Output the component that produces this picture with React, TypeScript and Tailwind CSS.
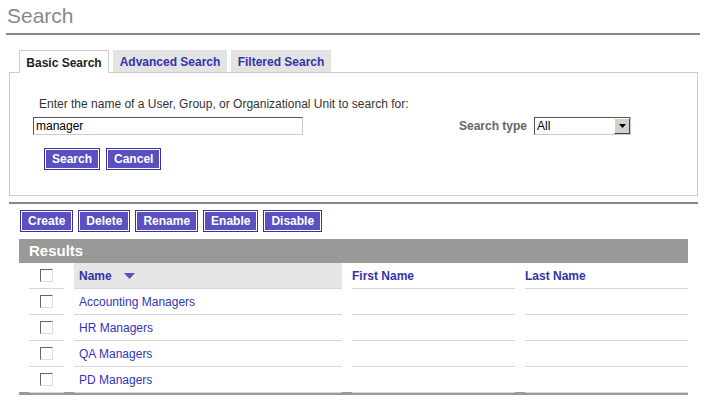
import React from "react";

const font = "font-['Liberation_Sans',Arial,Helvetica,sans-serif]";

function Btn({ label }: { label: string }) {
  return (
    <button className="h-[22px] px-[7px] border border-[#3a30a0] bg-[#5a50c0] shadow-[inset_0_0_0_1px_#ffffff] text-white font-bold text-[12px] leading-[20px]">
      {label}
    </button>
  );
}

function Check() {
  return (
    <span className="inline-block w-[13px] h-[13px] bg-white border border-t-[#666] border-l-[#666] border-b-[#ddd] border-r-[#ddd]" />
  );
}

const rows = ["Accounting Managers", "HR Managers", "QA Managers", "PD Managers"];

export default function App() {
  return (
    <div className={`w-[705px] h-[400px] bg-white ${font} overflow-hidden`}>
      <div className="pl-[6px] pr-[5px] pt-[4px]">
        <h1 className="text-[21px] leading-[24px] pl-[1px] text-[#888]">Search</h1>
        <div className="h-[2px] bg-[#888] mt-[5px]" />
      </div>

      <div className="ml-[9px] w-[689px] mt-[15px]">
        <div className="flex pl-[10px] gap-[4px] items-end">
          <div className="relative z-10 -mb-px w-[90px] h-[23px] pt-[2px] bg-white border border-b-0 border-[#ccc] text-[12px] font-bold text-[#222] flex items-center justify-center">
            Basic Search
          </div>
          <div className="w-[114px] h-[22px] pt-[2px] bg-[#e3e3e3] text-[12px] font-bold text-[#3333aa] flex items-center justify-center">
            Advanced Search
          </div>
          <div className="w-[100px] h-[22px] pt-[2px] bg-[#e3e3e3] text-[12px] font-bold text-[#3333aa] flex items-center justify-center">
            Filtered Search
          </div>
        </div>
        <div className="border border-[#ccc] h-[124px] pl-[23px] pt-[24px]">
          <div className="pl-[6px] text-[12px] leading-[14px] text-[#333]">
            Enter the name of a User, Group, or Organizational Unit to search for:
          </div>
          <div className="flex items-center mt-[6px]">
            <div className="w-[270px] h-[18px] border border-t-[#555] border-l-[#555] border-b-[#ccc] border-r-[#ccc] bg-white text-[12px] leading-[16px] pl-[2px] text-black">
              manager
            </div>
            <div className="ml-auto text-[12px] font-bold text-[#666] mr-[7px]">Search type</div>
            <div className="w-[97px] h-[18px] border border-t-[#555] border-l-[#555] border-b-[#ccc] border-r-[#ccc] bg-white flex items-center mr-[66px]">
              <span className="flex-1 text-[12px] leading-[16px] pl-[2px] text-black">All</span>
              <span className="w-[16px] h-[16px] bg-[#d4d0c8] border border-t-white border-l-white border-b-[#444] border-r-[#444] flex items-center justify-center">
                <svg width="7" height="4" viewBox="0 0 7 4">
                  <path d="M0 0h7L3.5 4z" fill="#000" />
                </svg>
              </span>
            </div>
          </div>
          <div className="flex gap-[6px] ml-[11px] mt-[13px]">
            <Btn label="Search" />
            <Btn label="Cancel" />
          </div>
        </div>
        <div className="h-[2px] bg-[#888] mt-[6px]" />
      </div>

      <div className="ml-[20px] mt-[6px] flex gap-[5px]">
        <Btn label="Create" />
        <Btn label="Delete" />
        <Btn label="Rename" />
        <Btn label="Enable" />
        <Btn label="Disable" />
      </div>

      <div className="ml-[19px] w-[669px] mt-[7px]">
        <div className="h-[24px] bg-[#999] pl-[10px] text-white font-bold text-[15px] leading-[24px]">Results</div>
        <div className="grid grid-cols-[35px_268px_163px_163px] gap-x-[10px] pl-[10px]">
          <div className="h-[26px] border-b border-[#d6d6d6] flex items-center justify-center">
            <Check />
          </div>
          <div className="h-[26px] bg-[#e6e6e6] border-b border-[#d6d6d6] flex items-center pl-[5px] text-[12px] font-bold text-[#3333aa]">
            Name
            <svg className="ml-[12px]" width="11" height="6" viewBox="0 0 11 6">
              <path d="M0 0h11L5.5 6z" fill="#5555bb" />
            </svg>
          </div>
          <div className="h-[26px] border-b border-[#d6d6d6] flex items-center text-[12px] font-bold text-[#3333aa]">
            First Name
          </div>
          <div className="h-[26px] border-b border-[#d6d6d6] flex items-center text-[12px] font-bold text-[#3333aa]">
            Last Name
          </div>
          {rows.map((r) => (
            <React.Fragment key={r}>
              <div className="h-[26px] border-b border-[#d6d6d6] flex items-center justify-center">
                <Check />
              </div>
              <div className="h-[26px] border-b border-[#d6d6d6] flex items-center pl-[5px] text-[12px] text-[#3333bb]">
                {r}
              </div>
              <div className="h-[26px] border-b border-[#d6d6d6]" />
              <div className="h-[26px] border-b border-[#d6d6d6]" />
            </React.Fragment>
          ))}
        </div>
        <div className="h-[3px] bg-[#999] -mt-[1px]" />
      </div>
    </div>
  );
}
